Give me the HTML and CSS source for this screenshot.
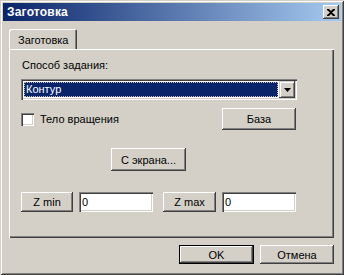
FILE: index.html
```html
<!DOCTYPE html>
<html>
<head>
<meta charset="utf-8">
<link rel="stylesheet" href="styles.css">
</head>
<body>
<div class="window">
  <div class="titlebar">
    <span class="title">Заготовка</span>
    <span class="close"><svg width="8" height="7" viewBox="0 0 8 7"><path d="M0 0h2l2 2 2-2h2v1L5 3.5 8 6v1H6L4 5 2 7H0V6l3-2.5L0 1z" fill="#000"/></svg></span>
  </div>
  <div class="content">
    <div class="tabs"><div class="tab">Заготовка</div></div>
    <div class="panel">
      <div class="label">Способ задания:</div>
      <div class="combo">
        <div class="combo-value"><span>Контур</span></div>
        <div class="combo-btn"><svg width="7" height="4" viewBox="0 0 7 4"><path d="M0 0h7L3.5 4z" fill="#000"/></svg></div>
      </div>
      <div class="row row-check">
        <div class="check"><span class="box"></span><span>Тело вращения</span></div>
        <div class="btn btn-base">База</div>
      </div>
      <div class="row row-screen">
        <div class="btn btn-screen">С экрана...</div>
      </div>
      <div class="row row-z">
        <div class="btn btn-z">Z min</div>
        <div class="field">0</div>
        <div class="btn btn-z btn-zmax">Z max</div>
        <div class="field">0</div>
      </div>
    </div>
    <div class="footer">
      <div class="btn btn-dlg btn-default">OK</div>
      <div class="btn btn-dlg">Отмена</div>
    </div>
  </div>
</div>
</body>
</html>
```
FILE: styles.css
```css
html, body {
  margin: 0;
  padding: 0;
  background: #d4d0c8;
}
body {
  font-family: "Liberation Sans", Arial, sans-serif;
  font-size: 11px;
  color: #000;
}
.window {
  width: 344px;
  height: 275px;
  box-sizing: border-box;
  padding: 3px;
  background: #d4d0c8;
  box-shadow: inset 1px 1px #d4d0c8, inset -1px -1px #404040, inset 2px 2px #fff, inset -2px -2px #808080;
}
.titlebar {
  height: 18px;
  background: linear-gradient(to right, #0a246a, #a6caf0);
  display: flex;
  align-items: center;
  justify-content: space-between;
  padding: 0 2px 0 4px;
}
.title {
  color: #fff;
  font-weight: bold;
  font-size: 12px;
  letter-spacing: 0.2px;
}
.close {
  width: 16px;
  height: 14px;
  background: #d4d0c8;
  box-shadow: inset -1px -1px #404040, inset 1px 1px #fff, inset -2px -2px #808080;
  display: flex;
  align-items: center;
  justify-content: center;
}
.content {
  padding: 8px 0 0 6px;
}
.tabs {
  display: flex;
}
.tab {
  width: 68px;
  height: 20px;
  box-sizing: border-box;
  padding: 5px 0 0 9px;
  line-height: 13px;
  box-shadow: inset 1px 1px #fff, inset -1px 0 #404040, inset -2px 0 #808080;
  border-top-left-radius: 2px;
  border-top-right-radius: 2px;
}
.panel {
  width: 325px;
  height: 189px;
  box-sizing: border-box;
  padding: 10px 0 0 12px;
  box-shadow: inset 1px 1px #fff, inset -1px -1px #404040, inset -2px -2px #808080;
}
.label {
  line-height: 13px;
  height: 13px;
  padding-left: 1px;
}
.combo {
  margin-top: 7px;
  width: 276px;
  height: 21px;
  box-sizing: border-box;
  padding: 2px;
  background: #fff;
  box-shadow: inset 1px 1px #808080, inset 2px 2px #404040, inset -1px -1px #fff, inset -2px -2px #d4d0c8;
  display: flex;
}
.combo-value {
  flex: 1;
  padding: 1px;
}
.combo-value span {
  display: block;
  height: 15px;
  background: #0a246a;
  color: #fff;
  line-height: 15px;
  padding-left: 2px;
  outline: 1px dotted #c0c0c0;
  outline-offset: -1px;
}
.combo-btn {
  width: 16px;
  height: 17px;
  background: #d4d0c8;
  box-shadow: inset -1px -1px #404040, inset 1px 1px #d4d0c8, inset 2px 2px #fff, inset -2px -2px #808080;
  display: flex;
  align-items: center;
  justify-content: center;
}
.row {
  display: flex;
  align-items: center;
}
.row-check {
  margin-top: 8px;
  width: 275px;
  justify-content: space-between;
}
.check {
  display: flex;
  align-items: center;
}
.box {
  width: 13px;
  height: 13px;
  box-sizing: border-box;
  background: #fff;
  box-shadow: inset 1px 1px #808080, inset 2px 2px #404040, inset -1px -1px #fff, inset -2px -2px #d4d0c8;
  margin-right: 6px;
}
.btn {
  background: #d4d0c8;
  box-shadow: inset -1px -1px #404040, inset 1px 1px #fff, inset -2px -2px #808080;
  display: flex;
  align-items: center;
  justify-content: center;
  box-sizing: border-box;
}
.btn-base {
  width: 74px;
  height: 22px;
}
.row-screen {
  margin-top: 18px;
  padding-left: 90px;
}
.btn-screen {
  width: 75px;
  height: 23px;
}
.row-z {
  margin-top: 21px;
}
.btn-z {
  width: 52px;
  height: 20px;
}
.btn-zmax {
  width: 53px;
  margin-left: 10px;
}
.field {
  width: 74px;
  height: 20px;
  box-sizing: border-box;
  background: #fff;
  margin-left: 6px;
  padding: 3px 0 0 3px;
  line-height: 14px;
  box-shadow: inset 1px 1px #808080, inset 2px 2px #404040, inset -1px -1px #fff, inset -2px -2px #d4d0c8;
}
.footer {
  display: flex;
  justify-content: flex-end;
  gap: 6px;
  width: 325px;
  margin-top: 7px;
}
.btn-dlg {
  width: 75px;
  height: 19px;
}
.btn-dlg + .btn-dlg {
  width: 74px;
}
.btn-default {
  box-shadow: inset 0 0 0 1px #000, inset -2px -2px #404040, inset 2px 2px #fff, inset -3px -3px #808080;
}
```
